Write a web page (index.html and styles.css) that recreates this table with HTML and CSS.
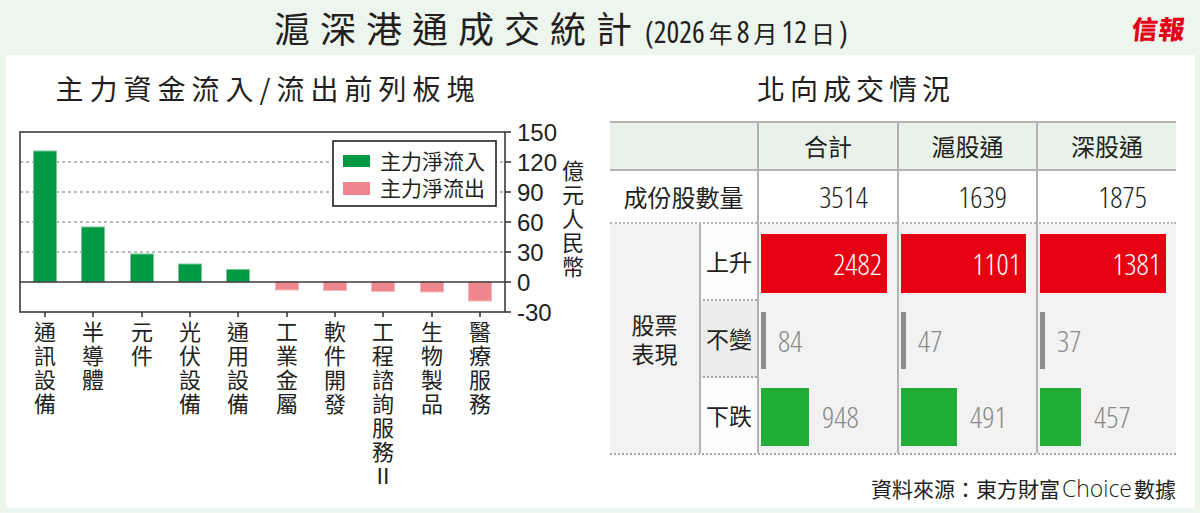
FILE: index.html
```html
<!DOCTYPE html>
<html lang="zh-Hant">
<head>
<meta charset="utf-8">
<title>滬深港通成交統計</title>
<link rel="stylesheet" href="styles.css">
</head>
<body>
<div class="page">
  <header class="topbar">
    <h1 class="title">滬深港通成交統計<span class="date"><span class="num">(2026</span><span>年</span><span class="num">8</span><span>月</span><span class="num">12</span><span>日</span><span class="num">)</span></span></h1>
    <div class="logo">信報</div>
  </header>
  <main class="panel">
    <section class="flow">
      <h2 class="sec-title flow-title">主力資金流入/流出前列板塊</h2>
      <svg class="chart" width="594" height="395" viewBox="6 110 594 395" xmlns="http://www.w3.org/2000/svg">
        <g class="grid">
          <line x1="20" x2="505" y1="162" y2="162"/>
          <line x1="20" x2="505" y1="192" y2="192"/>
          <line x1="20" x2="505" y1="222" y2="222"/>
          <line x1="20" x2="505" y1="252" y2="252"/>
        </g>
        <g class="pos">
          <rect x="33.5" y="151" width="23" height="131"/>
          <rect x="81.5" y="227" width="23" height="55"/>
          <rect x="130.5" y="254" width="23" height="28"/>
          <rect x="178.5" y="264" width="23" height="18"/>
          <rect x="226.5" y="269.5" width="23" height="12.5"/>
        </g>
        <g class="neg">
          <rect x="275.5" y="282" width="23" height="8"/>
          <rect x="323.5" y="282" width="23" height="8.5"/>
          <rect x="371.5" y="282" width="23" height="9.5"/>
          <rect x="420.5" y="282" width="23" height="10"/>
          <rect x="468.5" y="282" width="23" height="19"/>
        </g>
        <g class="axis">
          <rect x="20" y="132" width="485" height="180" fill="none"/>
          <line x1="20" x2="505" y1="282" y2="282"/>
          <line x1="505" x2="511" y1="132" y2="132"/>
          <line x1="505" x2="511" y1="162" y2="162"/>
          <line x1="505" x2="511" y1="192" y2="192"/>
          <line x1="505" x2="511" y1="222" y2="222"/>
          <line x1="505" x2="511" y1="252" y2="252"/>
          <line x1="505" x2="511" y1="282" y2="282"/>
          <line x1="505" x2="511" y1="312" y2="312"/>
          <line x1="45" x2="45" y1="312" y2="317"/>
          <line x1="93" x2="93" y1="312" y2="317"/>
          <line x1="142" x2="142" y1="312" y2="317"/>
          <line x1="190" x2="190" y1="312" y2="317"/>
          <line x1="238" x2="238" y1="312" y2="317"/>
          <line x1="287" x2="287" y1="312" y2="317"/>
          <line x1="335" x2="335" y1="312" y2="317"/>
          <line x1="383" x2="383" y1="312" y2="317"/>
          <line x1="432" x2="432" y1="312" y2="317"/>
          <line x1="480" x2="480" y1="312" y2="317"/>
        </g>
        <g class="ylab">
          <text x="517" y="140.5">150</text>
          <text x="517" y="170.5">120</text>
          <text x="517" y="200.5">90</text>
          <text x="517" y="230.5">60</text>
          <text x="517" y="260.5">30</text>
          <text x="517" y="290.5">0</text>
          <text x="517" y="320.5">-30</text>
        </g>
        <text class="vtext unit" x="573" y="160">億元人民幣</text>
        <g class="legend">
          <rect class="lbox" x="333" y="141" width="163" height="65"/>
          <rect x="343" y="155" width="27" height="12" fill="#009a44"/>
          <rect x="343" y="182" width="27" height="13" fill="#f0878f"/>
          <text x="380" y="169">主力淨流入</text>
          <text x="380" y="196">主力淨流出</text>
        </g>
        <g class="cats">
          <text class="vtext" x="45" y="321">通訊設備</text>
          <text class="vtext" x="93" y="321">半導體</text>
          <text class="vtext" x="142" y="321">元件</text>
          <text class="vtext" x="190" y="321">光伏設備</text>
          <text class="vtext" x="238" y="321">通用設備</text>
          <text class="vtext" x="287" y="321">工業金屬</text>
          <text class="vtext" x="335" y="321">軟件開發</text>
          <text class="vtext" x="383" y="321">工程諮詢服務Ⅱ</text>
          <text class="vtext" x="432" y="321">生物製品</text>
          <text class="vtext" x="480" y="321">醫療服務</text>
        </g>
      </svg>
    </section>
    <section class="north">
      <h2 class="sec-title north-title">北向成交情況</h2>
      <div class="tbl">
        <div class="c hdr span2"></div>
        <div class="c hdr vl">合計</div>
        <div class="c hdr vl">滬股通</div>
        <div class="c hdr vl">深股通</div>

        <div class="c r2 span2 lbl">成份股數量</div>
        <div class="c r2 vl numcell"><span class="num">3514</span></div>
        <div class="c r2 vl numcell"><span class="num">1639</span></div>
        <div class="c r2 vl numcell"><span class="num">1875</span></div>

        <div class="c group">股票<br>表現</div>
        <div class="c sub vl white dot">上升</div>
        <div class="c data vl up"><div class="redbar"><span class="num">2482</span></div></div>
        <div class="c data vl up"><div class="redbar"><span class="num">1101</span></div></div>
        <div class="c data vl up"><div class="redbar"><span class="num">1381</span></div></div>

        <div class="c sub vl grey dot">不變</div>
        <div class="c data vl flat"><div class="graybar"></div><span class="num gnum">84</span></div>
        <div class="c data vl flat"><div class="graybar"></div><span class="num gnum">47</span></div>
        <div class="c data vl flat"><div class="graybar"></div><span class="num gnum">37</span></div>

        <div class="c sub vl white">下跌</div>
        <div class="c data vl down"><div class="greenbar" style="width:48px"></div><span class="num gnum">948</span></div>
        <div class="c data vl down"><div class="greenbar" style="width:56px"></div><span class="num gnum">491</span></div>
        <div class="c data vl down"><div class="greenbar" style="width:41px"></div><span class="num gnum">457</span></div>
      </div>
      <p class="source">資料來源：東方財富<span class="latin">Choice</span>數據</p>
    </section>
  </main>
</div>
</body>
</html>
```
FILE: styles.css
```css
* {
  box-sizing: border-box;
  margin: 0;
  padding: 0;
}

html, body {
  width: 1200px;
  height: 513px;
  overflow: hidden;
}

body {
  background: #edf5ef;
  font-family: "Noto Sans CJK TC", "Noto Sans CJK SC", sans-serif;
  color: #231f20;
}

.num {
  font-family: "Open Sans", "Liberation Sans", sans-serif;
  font-weight: 300;
  font-stretch: 75%;
}

/* ---------- top bar ---------- */
.topbar {
  height: 55px;
  display: flex;
  align-items: center;
  padding-left: 274px;
  padding-right: 14px;
}

.title {
  font-size: 36px;
  font-weight: 400;
  line-height: 1;
  letter-spacing: 10px;
  display: flex;
  align-items: baseline;
}

.date {
  display: flex;
  align-items: baseline;
  gap: 4px;
  margin-left: 3px;
  font-size: 24px;
  font-weight: 400;
  letter-spacing: 0;
}

.date .num {
  font-size: 30px;
  font-weight: 400;
}

.logo {
  margin-left: auto;
  color: #e5001a;
  font-size: 26px;
  font-weight: 900;
  line-height: 1;
  letter-spacing: 1px;
  transform: skewX(-6deg);
}

/* ---------- white panel ---------- */
.panel {
  margin: 0 5px 0 6px;
  height: 453px;
  background: #fff;
  display: flex;
}

.flow {
  width: 594px;
}

.north {
  flex: 1;
}

.sec-title {
  font-size: 28px;
  font-weight: 400;
  line-height: 28px;
  letter-spacing: 5px;
  padding-top: 19px;
}

.flow-title {
  margin-left: 14px;
  width: 496px;
  letter-spacing: 6px;
  text-align: center;
}

.north-title {
  margin-left: 157px;
}

/* ---------- chart ---------- */
.chart {
  display: block;
  margin-top: 8px;
  font-family: "Noto Sans CJK TC", "Noto Sans CJK SC", sans-serif;
}

.grid line {
  stroke: #a3a3a3;
  stroke-width: 1.5;
  stroke-dasharray: 3 3;
}

.pos rect {
  fill: #009a44;
  stroke: #7cc797;
  stroke-width: 1;
}

.neg rect {
  fill: #f0878f;
  stroke: #f7b9bd;
  stroke-width: 1;
}

.axis rect,
.axis line {
  stroke: #3d3a3b;
  stroke-width: 1.6;
}

.ylab text {
  font-family: "Liberation Sans", Arial, sans-serif;
  font-size: 24px;
  fill: #231f20;
}

.vtext {
  writing-mode: vertical-rl;
  font-size: 22px;
  letter-spacing: 2px;
  fill: #231f20;
}

.legend .lbox {
  fill: #fff;
  stroke: #231f20;
  stroke-width: 1.6;
}

.legend text {
  font-size: 21px;
  fill: #231f20;
}

/* ---------- table ---------- */
.tbl {
  margin: 19px 0 0 10px;
  width: 566px;
  display: grid;
  grid-template-columns: 89px 58px 140px 139px 140px;
  grid-template-rows: 48px 53px 77px 77px 75px;
  border-top: 2px solid #b3b3b3;
  border-bottom: 2px dotted #a6a6a6;
}

.c {
  display: flex;
  align-items: center;
  justify-content: center;
  font-size: 24px;
  line-height: 1;
}

.span2 {
  grid-column: span 2;
}

.vl {
  border-left: 2px solid #b3b3b3;
}

.hdr {
  background: #e8f2ea;
  border-bottom: 2px solid #b3b3b3;
}

.r2 {
  border-bottom: 2px dotted #b3b3b3;
}

.numcell {
  justify-content: flex-end;
  padding-right: 29px;
}

.numcell .num {
  font-size: 30px;
  color: #231f20;
}

.group {
  grid-row: span 3;
  background: #f1f2f1;
  font-size: 23px;
  line-height: 29px;
  text-align: center;
}

.sub {
  font-size: 23px;
}

.white {
  background: #fdfdfd;
}

.grey {
  background: #ededed;
}

.dot {
  border-bottom: 2px dotted #a6a6a6;
}

.data {
  background: #f1f2f1;
  justify-content: flex-start;
  padding-left: 2px;
}

.up {
  padding: 10px 10px 8px 2px;
}

.redbar {
  flex: 1;
  align-self: stretch;
  background: #e60012;
  display: flex;
  align-items: center;
  justify-content: flex-end;
  padding-right: 5px;
}

.redbar .num {
  color: #fff;
  font-size: 30px;
}

.flat {
  padding: 11px 0 9px 2px;
  align-items: stretch;
}

.graybar {
  width: 5px;
  background: #8c8c8c;
}

.gnum {
  font-size: 30px;
  color: #8a8a8a;
  align-self: center;
}

.flat .gnum {
  margin-left: 12px;
}

.down {
  padding: 10px 0 7px 2px;
  align-items: stretch;
}

.greenbar {
  background: #22ac38;
  flex: none;
}

.down .gnum {
  margin-left: 13px;
}

.source {
  margin-top: 21px;
  padding-right: 19px;
  text-align: right;
  font-size: 21px;
  line-height: 24px;
  color: #231f20;
}

.latin {
  font-family: "Open Sans", "Liberation Sans", sans-serif;
  font-weight: 300;
  font-size: 23px;
  margin: 0 2px;
}
```
